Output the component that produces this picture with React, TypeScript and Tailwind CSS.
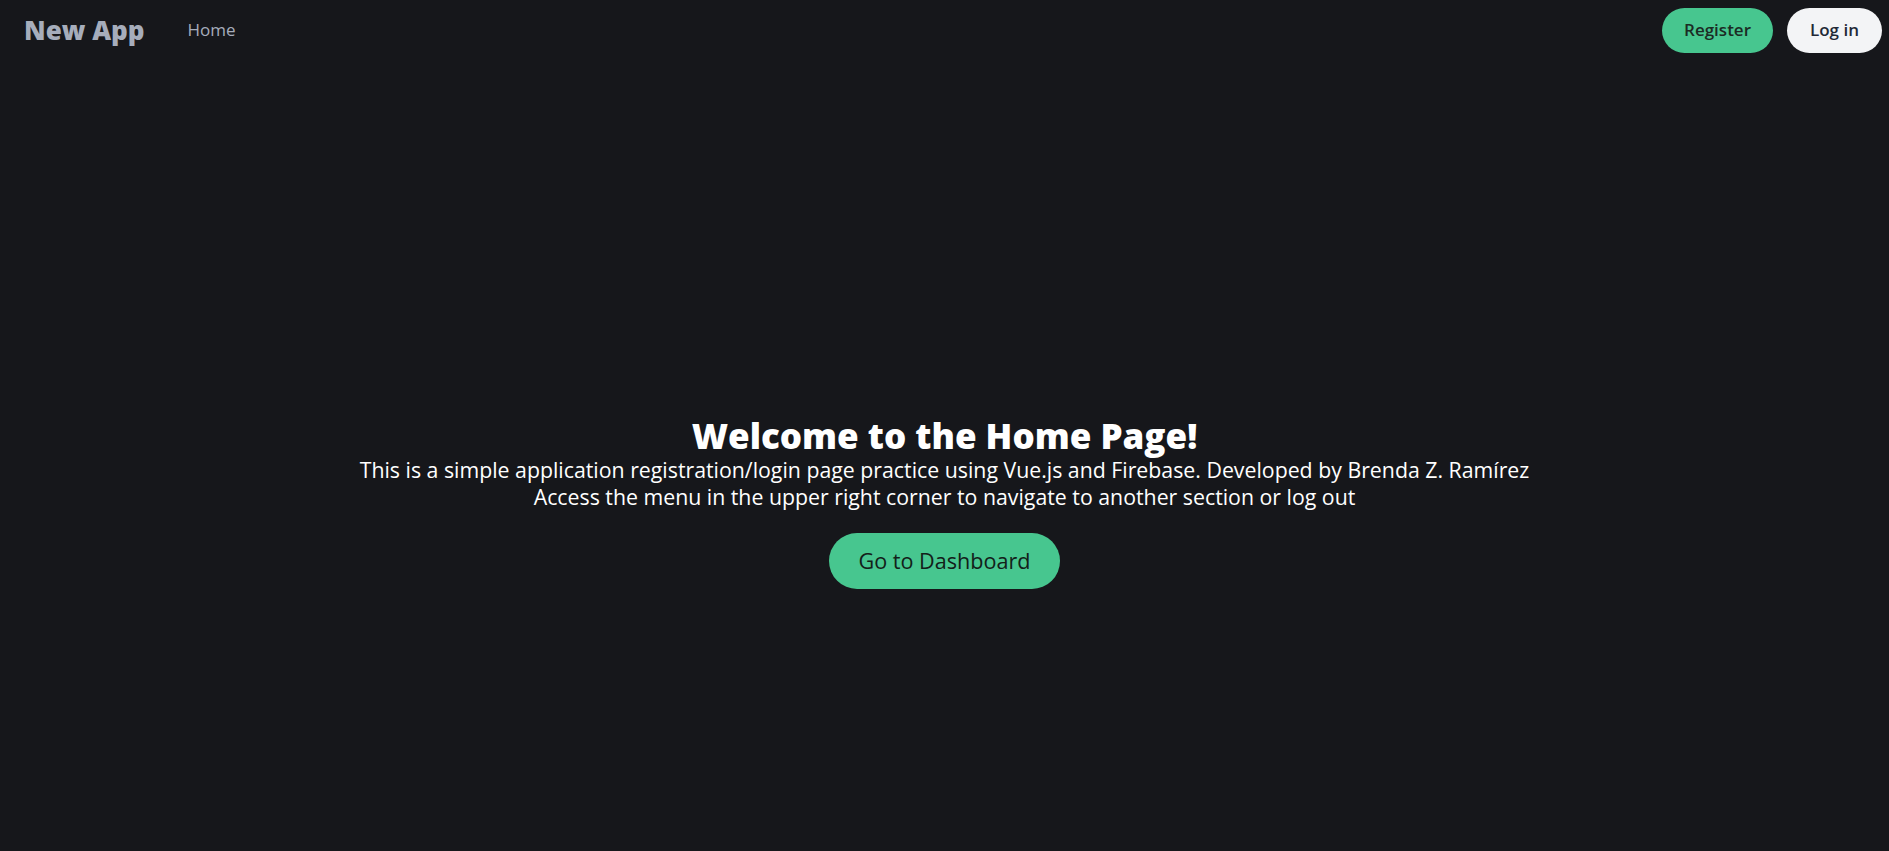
export default function App() {
  return (
    <div className="min-h-screen bg-[#16171b] font-['Open_Sans',sans-serif] text-white">
      <nav className="flex h-[60px] items-center justify-between pl-6 pr-[7px]">
        <div className="flex items-center gap-[43px]">
          <span className="text-[26px] font-extrabold text-[#a6adbb]">New App</span>
          <a className="text-[17px] text-[#a6adbb]">Home</a>
        </div>
        <div className="flex items-center gap-[14px]">
          <button className="h-[45px] rounded-full bg-[#47c68f] px-[22px] text-[17px] font-semibold text-[#1b2b24]">
            Register
          </button>
          <button className="h-[45px] rounded-full bg-[#f3f4f6] px-[23px] text-[17px] font-semibold text-[#1f2937]">
            Log in
          </button>
        </div>
      </nav>

      <main className="flex flex-col items-center pt-[356px] text-center">
        <h1 className="text-[35px] leading-[40px] font-extrabold">Welcome to the Home Page!</h1>
        <p className="text-[21.3px] leading-[27px]">
          This is a simple application registration/login page practice using Vue.js and Firebase. Developed by Brenda Z. Ramírez
        </p>
        <p className="text-[21.3px] leading-[27px]">
          Access the menu in the upper right corner to navigate to another section or log out
        </p>
        <button className="mt-[23px] h-[56px] rounded-full bg-[#47c68f] px-[29px] text-[21.6px] text-[#132019]">
          Go to Dashboard
        </button>
      </main>
    </div>
  );
}
